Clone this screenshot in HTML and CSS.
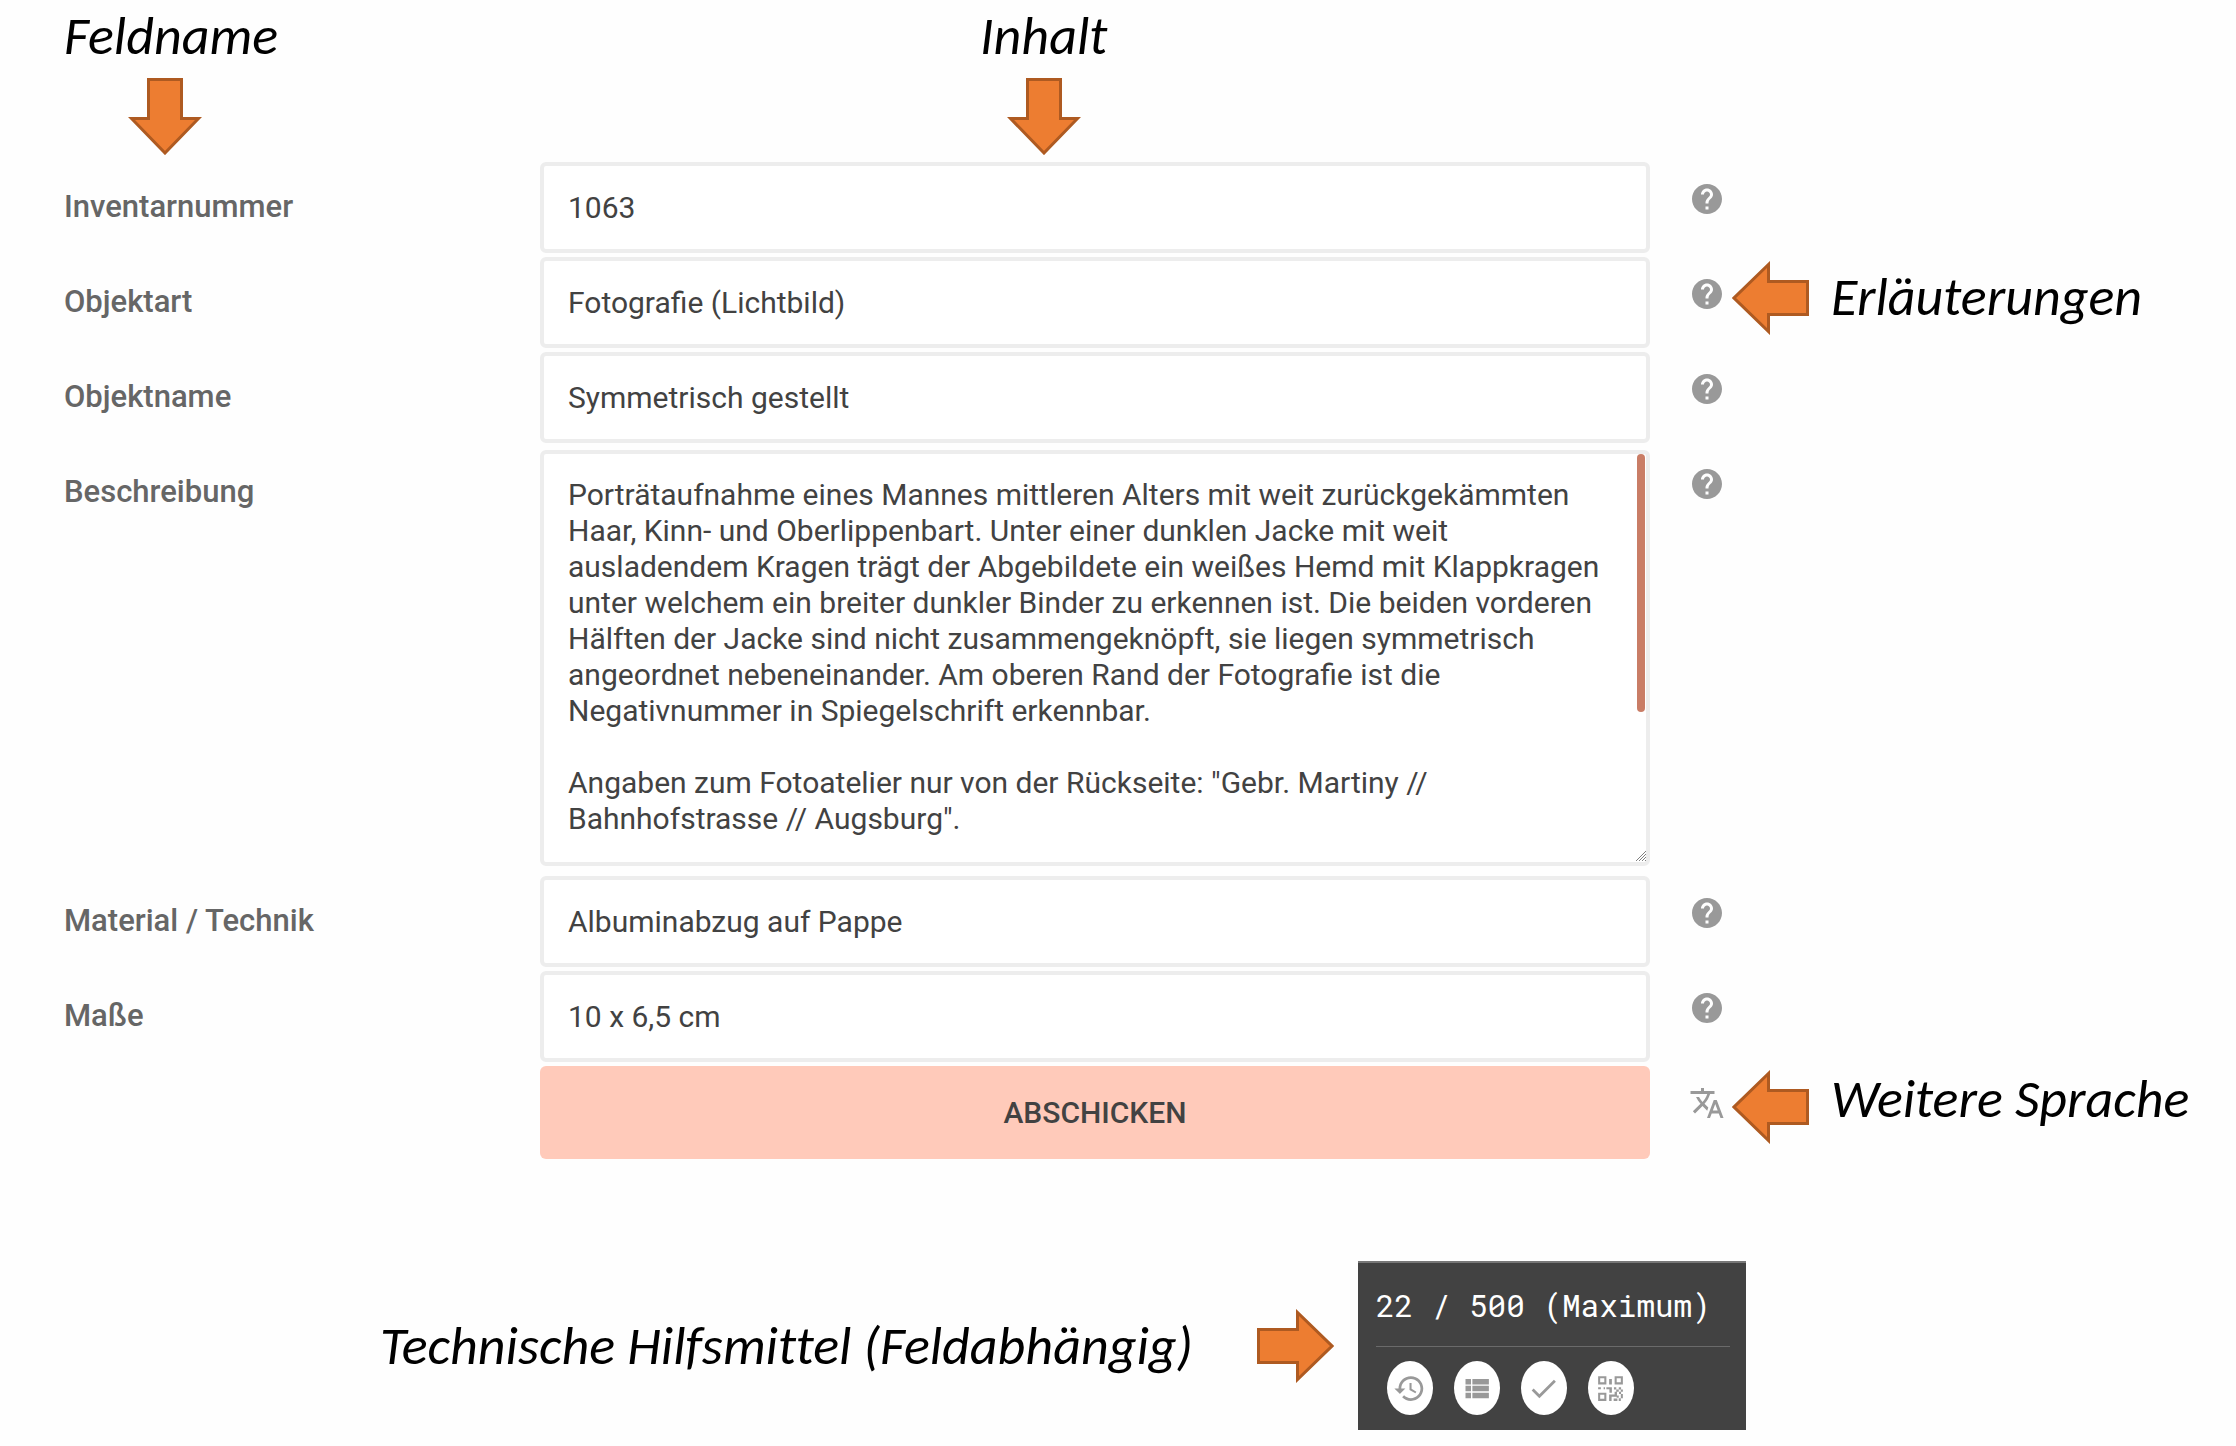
FILE: index.html
```html
<!DOCTYPE html>
<html lang="de">
<head>
<meta charset="utf-8">
<meta name="viewport" content="width=device-width, initial-scale=1">
<title>Objekt bearbeiten</title>
<link rel="stylesheet" href="styles.css">
</head>
<body>
<svg class="sprite" aria-hidden="true">
  <symbol id="arrow-down" viewBox="0 0 74 77"><path d="M20.500 1.500h33v39h17L37 75 3.500 40.500h17z"/></symbol>
  <symbol id="arrow-left" viewBox="0 0 77 74"><path d="M75.500 20.500v33h-39v17L2 37 36.500 3.500v17z"/></symbol>
  <symbol id="arrow-right" viewBox="0 0 77 74"><path d="M1.500 20.500v33h39v17L75 37 40.500 3.500v17z"/></symbol>
  <symbol id="help" viewBox="0 0 24 24"><path d="M12 2C6.480 2 2 6.480 2 12s4.480 10 10 10 10-4.480 10-10S17.520 2 12 2zm1 17h-2v-2h2v2zm2.070-7.750l-.9.920C13.450 12.900 13 13.500 13 15h-2v-.5c0-1.100.450-2.100 1.170-2.830l1.240-1.260c.370-.360.590-.860.590-1.410 0-1.100-.9-2-2-2s-2 .9-2 2H8c0-2.210 1.790-4 4-4s4 1.790 4 4c0 .880-.360 1.680-.930 2.250z"/></symbol>
  <symbol id="translate" viewBox="0 0 24 24"><path d="M12.870 15.070l-2.540-2.510.030-.030c1.740-1.940 2.980-4.170 3.710-6.530H17V4h-7V2H8v2H1v1.990h11.170C11.500 7.920 10.440 9.750 9 11.350 8.070 10.320 7.300 9.190 6.690 8h-2c.730 1.630 1.730 3.170 2.980 4.560l-5.090 5.020L4 19l5-5 3.110 3.110.760-2.040zM18.500 10h-2L12 22h2l1.120-3h4.750L21 22h2l-4.500-12zm-2.620 7l1.620-4.330L19.120 17h-3.240z"/></symbol>
  <symbol id="history" viewBox="0 0 24 24"><path d="M13 3c-4.970 0-9 4.030-9 9H1l3.890 3.890.070.140L9 12H6c0-3.870 3.130-7 7-7s7 3.130 7 7-3.130 7-7 7c-1.930 0-3.680-.790-4.940-2.060l-1.420 1.420C8.270 19.990 10.510 21 13 21c4.970 0 9-4.030 9-9s-4.030-9-9-9zm-1 5v5l4.280 2.540.720-1.210-3.500-2.080V8H12z"/></symbol>
  <symbol id="list" viewBox="0 0 24 24"><path d="M4 14h4v-4H4v4zm0 5h4v-4H4v4zM4 9h4V5H4v4zm5 5h12v-4H9v4zm0 5h12v-4H9v4zM9 5v4h12V5H9z"/></symbol>
  <symbol id="check" viewBox="0 0 24 24"><path d="M9 16.170L4.830 12l-1.420 1.410L9 19 21 7l-1.410-1.410z"/></symbol>
  <symbol id="qr" viewBox="0 0 24 24"><path d="M3 3h6v6H3zM4.500 4.500v3h3v-3zM15 3h6v6h-6zM16.500 4.500v3h3v-3zM3 15h6v6H3zM4.500 16.500v3h3v-3z" fill-rule="evenodd"/><path d="M11 5h2v4h-2zM3 11h2v1.600H3zM7 11h1v1.600H7zM9 11h4v4h-1.800v-2.400H9zM14.500 11h1.700v1.700h-1.700zM16.200 12.700H18v1.700h-1.800zM18 11h1.700v1.700H18zM19.500 12.700H21v1.700h-1.500zM15 14.400h1.700V18H15zM18.200 14.400h1.500V16h-1.500zM11 16.300h4V18h-2.200v3H11zM19.500 16H21v3h-1.500zM16.500 17h1.500v1.800h-1.500zM14.300 19.300H17V21h-2.700zM18 19h1.500v2H18z"/></symbol>
  <symbol id="grip" viewBox="0 0 10 10"><path d="M0 10L10 0M3 10l7-7M6 10l4-4M9 10l1-1"/></symbol>
</svg>

<main class="page">
  <header class="grid heads">
    <div class="head">
      <p class="note">Feldname</p>
      <svg class="arrow arrow-v"><use href="#arrow-down"/></svg>
    </div>
    <div class="head head-content">
      <p class="note">Inhalt</p>
      <svg class="arrow arrow-v"><use href="#arrow-down"/></svg>
    </div>
  </header>

  <form class="form">
    <div class="grid">
      <label class="label" for="inv">Inventarnummer</label>
      <input class="field" id="inv" type="text" value="1063">
      <div class="aside">
        <button class="icon-btn" type="button" aria-label="Hilfe"><svg class="icon"><use href="#help"/></svg></button>
      </div>
    </div>
    <div class="grid">
      <label class="label" for="art">Objektart</label>
      <input class="field" id="art" type="text" value="Fotografie (Lichtbild)">
      <div class="aside">
        <button class="icon-btn" type="button" aria-label="Hilfe"><svg class="icon"><use href="#help"/></svg></button>
        <svg class="arrow arrow-h"><use href="#arrow-left"/></svg>
        <p class="note">Erläuterungen</p>
      </div>
    </div>
    <div class="grid">
      <label class="label" for="name">Objektname</label>
      <input class="field" id="name" type="text" value="Symmetrisch gestellt">
      <div class="aside">
        <button class="icon-btn" type="button" aria-label="Hilfe"><svg class="icon"><use href="#help"/></svg></button>
      </div>
    </div>
    <div class="grid">
      <label class="label" for="desc">Beschreibung</label>
      <div class="area-wrap">
        <textarea class="field field-area" id="desc">Porträtaufnahme eines Mannes mittleren Alters mit weit zurückgekämmten Haar, Kinn- und Oberlippenbart. Unter einer dunklen Jacke mit weit ausladendem Kragen trägt der Abgebildete ein weißes Hemd mit Klappkragen unter welchem ein breiter dunkler Binder zu erkennen ist. Die beiden vorderen Hälften der Jacke sind nicht zusammengeknöpft, sie liegen symmetrisch angeordnet nebeneinander. Am oberen Rand der Fotografie ist die Negativnummer in Spiegelschrift erkennbar.

Angaben zum Fotoatelier nur von der Rückseite: "Gebr. Martiny // Bahnhofstrasse // Augsburg".</textarea>
        <span class="thumb"></span>
        <svg class="grip"><use href="#grip"/></svg>
      </div>
      <div class="aside">
        <button class="icon-btn" type="button" aria-label="Hilfe"><svg class="icon"><use href="#help"/></svg></button>
      </div>
    </div>
    <div class="grid">
      <label class="label" for="mat">Material / Technik</label>
      <input class="field" id="mat" type="text" value="Albuminabzug auf Pappe">
      <div class="aside">
        <button class="icon-btn" type="button" aria-label="Hilfe"><svg class="icon"><use href="#help"/></svg></button>
      </div>
    </div>
    <div class="grid">
      <label class="label" for="size">Maße</label>
      <input class="field" id="size" type="text" value="10 x 6,5 cm">
      <div class="aside">
        <button class="icon-btn" type="button" aria-label="Hilfe"><svg class="icon"><use href="#help"/></svg></button>
      </div>
    </div>
    <div class="grid">
      <button class="submit" type="submit">ABSCHICKEN</button>
      <div class="aside aside-submit">
        <button class="icon-btn" type="button" aria-label="Sprache"><svg class="icon"><use href="#translate"/></svg></button>
        <svg class="arrow arrow-h"><use href="#arrow-left"/></svg>
        <p class="note">Weitere Sprache</p>
      </div>
    </div>
  </form>

  <section class="tools">
    <p class="note">Technische Hilfsmittel (Feldabhängig)</p>
    <svg class="arrow arrow-h"><use href="#arrow-right"/></svg>
    <div class="panel">
      <p class="count">22 / 500 (Maximum)</p>
      <div class="panel-actions">
        <button class="tool" type="button" aria-label="Verlauf"><svg class="tool-icon"><use href="#history"/></svg></button>
        <button class="tool" type="button" aria-label="Liste"><svg class="tool-icon"><use href="#list"/></svg></button>
        <button class="tool" type="button" aria-label="Prüfen"><svg class="tool-icon"><use href="#check"/></svg></button>
        <button class="tool" type="button" aria-label="QR-Code"><svg class="tool-icon"><use href="#qr"/></svg></button>
      </div>
    </div>
  </section>
</main>
</body>
</html>
```
FILE: styles.css
```css
* { box-sizing: border-box; }

body {
  margin: 0;
  background: #fefefe;
  color: #424242;
  font-family: Roboto, "Liberation Sans", sans-serif;
  font-size: 30px;
  line-height: 36px;
}

p { margin: 0; }

.sprite { position: absolute; width: 0; height: 0; }

.page { padding: 6px 0 16px 64px; }

.grid {
  display: grid;
  grid-template-columns: 476fr 1110fr 586fr;
  align-items: start;
}

.note {
  color: #000;
  font-family: Carlito, Calibri, Lato, sans-serif;
  font-size: 54px;
  font-style: italic;
  font-variant-ligatures: none;
  line-height: 60px;
  white-space: nowrap;
}

.arrow {
  display: block;
  flex: none;
  fill: #ed7d31;
  stroke: #ae5a21;
  stroke-width: 3px;
}
.arrow-v { width: 74px; height: 77px; }
.arrow-h { width: 77px; height: 74px; }

/* column headings */
.head { display: flex; flex-direction: column; gap: 12px; }
.head .arrow { margin-left: 64px; }
.head-content { align-items: center; width: fit-content; margin-left: 440px; }
.head-content .arrow { margin-left: 0; }

/* form */
.form { display: flex; flex-direction: column; gap: 4px; padding-top: 7px; }

.label { padding-top: 27px; color: #666; font-size: 31px; font-weight: 500; }

.field {
  display: block;
  width: 100%;
  height: 91px;
  margin: 0;
  padding: 0 24px;
  border: 4px solid #ededed;
  border-radius: 6px;
  outline: 0;
  background: #fff;
  color: inherit;
  font: inherit;
}

.area-wrap { position: relative; padding: 3px 0 6px; }
.field-area {
  height: 416px;
  padding: 23px 30px 21px 24px;
  overflow: hidden;
  resize: none;
}
.thumb {
  position: absolute;
  top: 7px;
  right: 5px;
  width: 8px;
  height: 258px;
  border-radius: 4px;
  background: #c97d66;
}
.grip {
  position: absolute;
  right: 4px;
  bottom: 11px;
  width: 10px;
  height: 10px;
  stroke: #808080;
  stroke-width: 1px;
}

.submit {
  grid-column: 2;
  height: 93px;
  padding: 0;
  border: 0;
  border-radius: 6px;
  background: #ffcaba;
  color: inherit;
  font: inherit;
  font-weight: 500;
}

.aside { display: flex; align-items: flex-start; height: 91px; padding-left: 39px; }

.icon-btn {
  flex: none;
  width: 36px;
  height: 36px;
  margin: 19px 7px 0 0;
  padding: 0;
  border: 0;
  background: none;
  color: #999;
}
.icon { display: block; width: 36px; height: 36px; fill: currentColor; }
.aside .arrow { margin: 4px 22px 0 0; }
.aside .note { margin-top: 10px; }
.aside-submit .note { margin-top: 3px; }

/* tool panel */
.tools {
  display: flex;
  align-items: center;
  gap: 24px;
  padding: 102px 0 0 316px;
}
.tools .note { margin-right: 40px; }

.panel {
  width: 388px;
  padding: 24px 16px 15px 18px;
  border-top: 2px solid #777;
  background: #424242;
}
.count {
  padding-bottom: 23px;
  border-bottom: 1px solid #6a6a6a;
  color: #fff;
  font-family: "Roboto Mono", "DejaVu Sans Mono", monospace;
  font-size: 31px;
  white-space: nowrap;
}
.panel-actions { display: flex; gap: 21px; padding: 14px 0 0 11px; }
.tool {
  display: grid;
  place-items: center;
  width: 46px;
  height: 54px;
  padding: 0;
  border: 0;
  border-radius: 50%;
  background: #fff;
  color: #999;
}
.tool-icon { width: 33px; height: 33px; fill: currentColor; }
```
